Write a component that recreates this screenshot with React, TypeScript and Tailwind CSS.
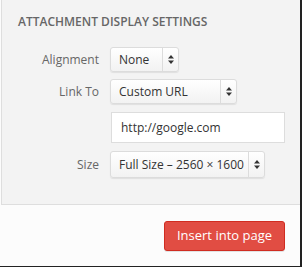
import React from 'react';

function Arrows() {
  return (
    <svg width="6" height="9" viewBox="0 0 6 9" className="block">
      <path d="M3 0 L6 3.5 L0 3.5 Z" fill="#333" />
      <path d="M0 5.5 L6 5.5 L3 9 Z" fill="#333" />
    </svg>
  );
}

function Select({ value, width, height }: { value: string; width: string; height: string }) {
  return (
    <div
      className={`flex items-stretch ${width} ${height} rounded-[3px] border border-[#dcdcdc] bg-gradient-to-b from-white to-[#f2f2f2] shadow-[0_1px_1px_rgba(0,0,0,0.08)]`}
    >
      <span className="flex-1 flex items-center pl-[8px] text-[12px] text-[#333] whitespace-nowrap">{value}</span>
      <span className="w-[16px] flex items-center justify-center border-l border-[#dcdcdc]">
        <Arrows />
      </span>
    </div>
  );
}

export default function App() {
  return (
    <div className="w-[302px] h-[267px] flex flex-col border-r-2 border-b border-[#222] bg-[#fcfcfc] font-['Open_Sans',sans-serif]">
      <div className="h-[205px] ml-[1px] border-l border-b border-[#dedede] bg-[#f3f3f3]">
        <h2 className="mt-[14px] ml-[16px] text-[12px] leading-[16px] font-semibold uppercase text-[#666]">
          Attachment Display Settings
        </h2>

        <div className="mt-[17px] flex items-center">
          <span className="w-[97px] text-right text-[12px] text-[#666]">Alignment</span>
          <div className="ml-[11px]">
            <Select value="None" width="w-[69px]" height="h-[25px]" />
          </div>
        </div>

        <div className="mt-[7px] flex items-center">
          <span className="w-[97px] text-right text-[12px] text-[#666]">Link To</span>
          <div className="ml-[11px]">
            <Select value="Custom URL" width="w-[127px]" height="h-[25px]" />
          </div>
        </div>

        <div className="mt-[8px] ml-[109px] w-[174px] h-[31px] flex items-center pl-[9px] bg-white border border-[#dddddd] text-[12px] text-[#333]">
          http://google.com
        </div>

        <div className="mt-[8px] flex items-center">
          <span className="w-[97px] text-right text-[12px] text-[#666]">Size</span>
          <div className="ml-[11px]">
            <Select value="Full Size – 2560 × 1600" width="w-[155px]" height="h-[27px]" />
          </div>
        </div>
      </div>

      <div className="flex-1 flex items-center justify-end pr-[15px]">
        <button className="h-[30px] px-[12px] rounded-[3px] border border-[#d02c21] bg-[#e14d43] text-white text-[13px] shadow-[0_1px_0_rgba(0,0,0,0.1)]">
          Insert into page
        </button>
      </div>
    </div>
  );
}
